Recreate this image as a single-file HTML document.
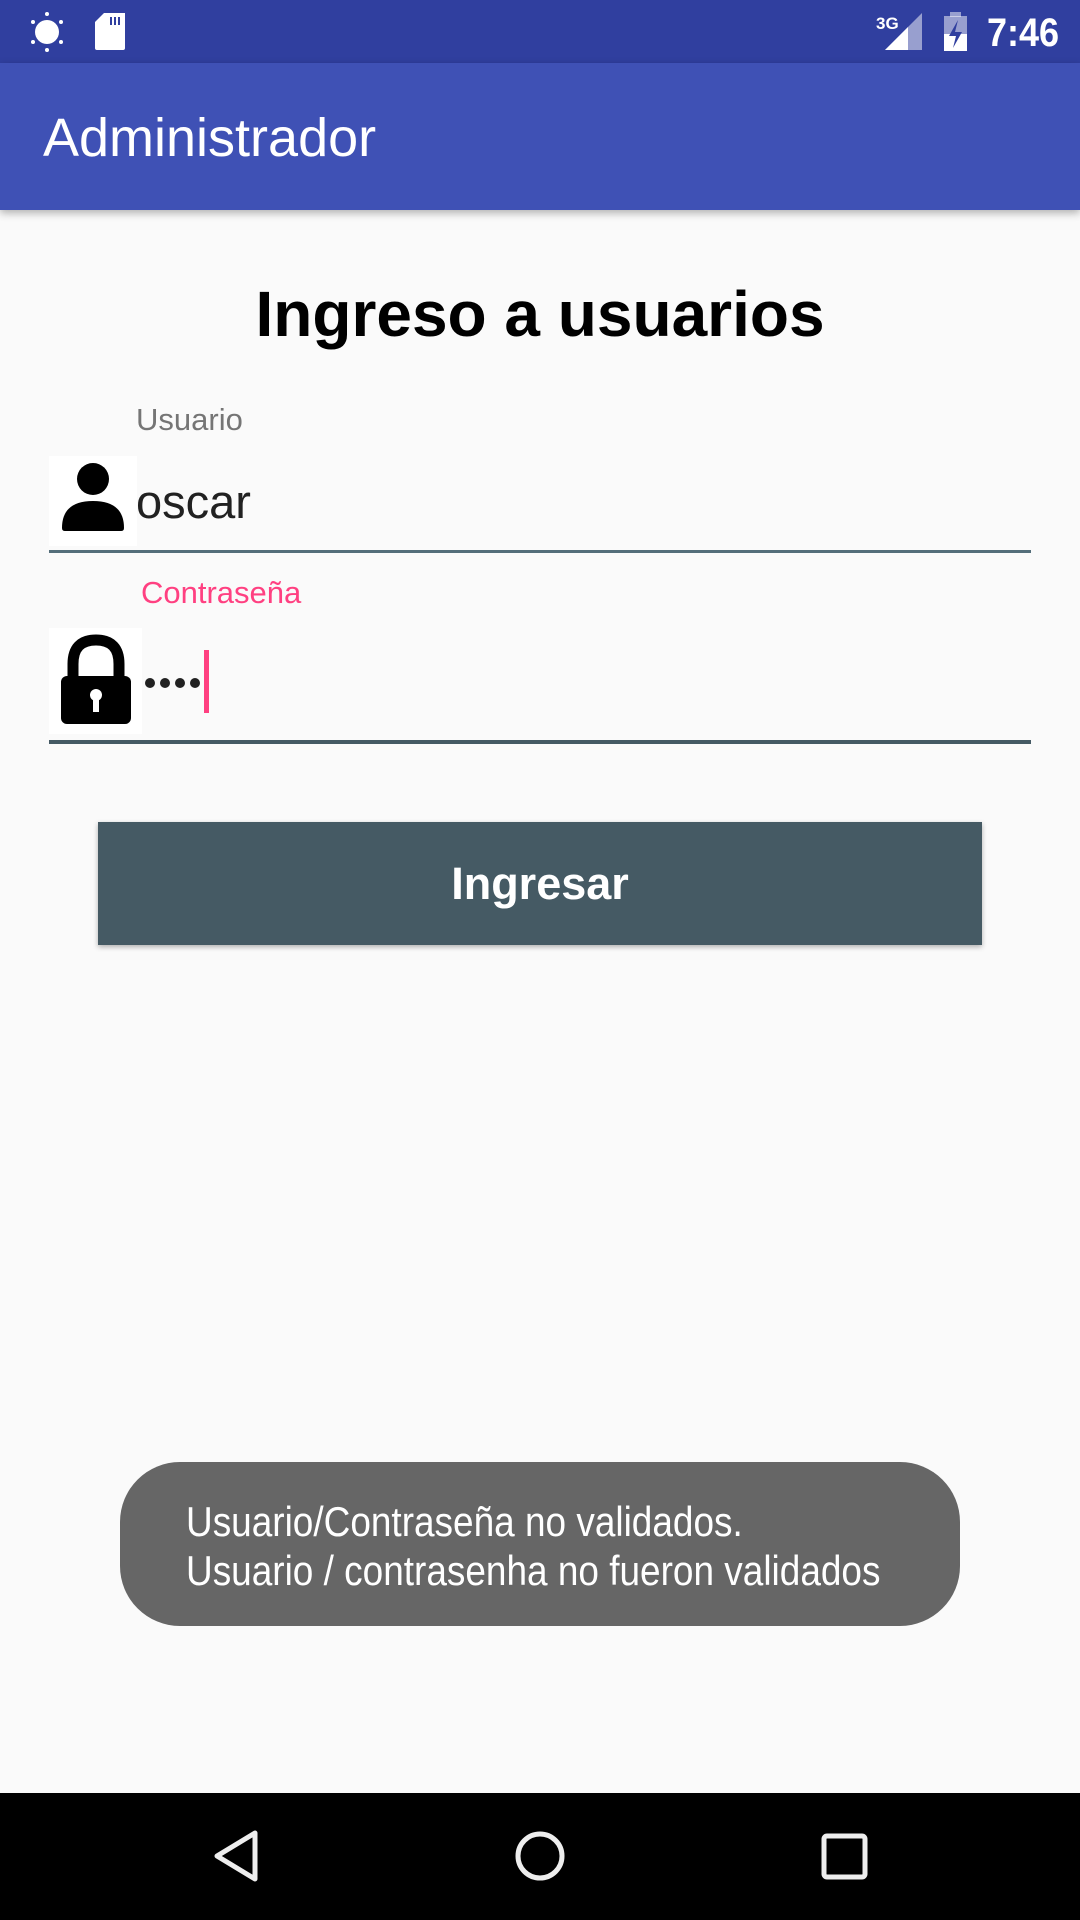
<!DOCTYPE html>
<html><head><meta charset="utf-8"><style>
*{margin:0;padding:0;box-sizing:border-box}
body{width:1080px;height:1920px;position:relative;background:#FAFAFA;font-family:"Liberation Sans",sans-serif;overflow:hidden}
.abs{position:absolute}
</style></head><body>
<div class="abs" style="left:0;top:0;width:1080px;height:63px;background:#303F9F"></div>
<svg class="abs" style="left:0;top:0" width="1080" height="63">
 <circle cx="47" cy="32" r="12" fill="#fff"/>
 <g fill="#fff"><circle cx="47" cy="14" r="2"/><circle cx="47" cy="50" r="2"/><circle cx="33" cy="22" r="2"/><circle cx="61" cy="22" r="2"/><circle cx="33" cy="42" r="2"/><circle cx="61" cy="42" r="2"/></g>
 <path d="M104 13 H125 V48 Q125 50 123 50 H97 Q95 50 95 48 V22 Z" fill="#fff"/>
 <rect x="110" y="17" width="2" height="8" fill="#303F9F"/><rect x="114" y="17" width="2" height="8" fill="#303F9F"/><rect x="118" y="17" width="2" height="8" fill="#303F9F"/>
 <text x="876" y="29" font-size="17" font-weight="bold" fill="#fff" font-family="Liberation Sans">3G</text>
 <path d="M885 50 L922 13 V50 Z" fill="#fff" opacity="0.5"/>
 <path d="M885 50 L908 27 V50 Z" fill="#fff"/>
 <rect x="944" y="16" width="23" height="35" fill="#fff" opacity="0.5"/><rect x="950" y="12" width="11" height="5" fill="#fff" opacity="0.5"/>
 <path d="M944 34 H967 V51 H944 Z" fill="#fff"/>
 <path d="M958 20 L949 36 H956 L953 48 L962 32 H955 Z" fill="#303F9F"/>
 <text x="987" y="46" font-size="40" fill="#fff" font-family="Liberation Sans" font-weight="bold" transform="translate(987 0) scale(0.9 1) translate(-987 0)">7:46</text>
</svg>
<div class="abs" style="left:0;top:63px;width:1080px;height:147px;background:#3F51B5;box-shadow:0 3px 8px rgba(0,0,0,.3)"></div>
<div class="abs" style="left:43px;top:106px;font-size:54px;color:#fff;line-height:64px">Administrador</div>

<div class="abs" style="left:0;top:274px;width:1080px;text-align:center;font-size:64px;font-weight:bold;color:#000;line-height:80px">Ingreso a usuarios</div>

<div class="abs" style="left:136px;top:400px;font-size:31px;color:#757575;line-height:40px">Usuario</div>
<svg class="abs" style="left:49px;top:456px" width="88" height="90">
 <rect width="88" height="90" fill="#fff"/>
 <circle cx="44" cy="23" r="16" fill="#000"/>
 <path d="M13 72 Q13 45 44 45 Q75 45 75 72 Q75 75 72 75 H16 Q13 75 13 72 Z" fill="#000"/>
</svg>
<div class="abs" style="left:136px;top:474px;font-size:47px;color:#212121;line-height:56px">oscar</div>
<div class="abs" style="left:49px;top:550px;width:982px;height:3px;background:#546E7A"></div>

<div class="abs" style="left:141px;top:573px;font-size:31px;color:#FF4081;line-height:40px">Contraseña</div>
<svg class="abs" style="left:49px;top:628px" width="93" height="106">
 <rect width="93" height="106" fill="#fff"/>
 <path d="M24 50 V36 Q24 12 47 12 Q70 12 70 36 V50" stroke="#000" stroke-width="11" fill="none"/>
 <rect x="12" y="48" width="70" height="48" rx="6" fill="#000"/>
 <circle cx="47" cy="67" r="6" fill="#fff"/><rect x="44" y="67" width="6" height="17" fill="#fff"/>
</svg>
<svg class="abs" style="left:140px;top:670px" width="70" height="30">
 <g fill="#212121"><circle cx="10" cy="13" r="5"/><circle cx="25" cy="13" r="5"/><circle cx="40" cy="13" r="5"/><circle cx="55" cy="13" r="5"/></g>
</svg>
<div class="abs" style="left:204px;top:650px;width:5px;height:63px;background:#FF4081"></div>
<div class="abs" style="left:49px;top:740px;width:982px;height:4px;background:#455A64"></div>

<div class="abs" style="left:98px;top:822px;width:884px;height:123px;background:#455A64;box-shadow:0 2px 5px rgba(0,0,0,.3);color:#fff;font-size:45px;font-weight:bold;text-align:center;line-height:123px">Ingresar</div>

<div class="abs" style="left:120px;top:1462px;width:840px;height:164px;background:#666;border-radius:60px"></div>
<div class="abs" style="left:186px;top:1497px;font-size:42px;color:#fff;line-height:49px;transform:scaleX(0.88);transform-origin:left top;white-space:nowrap">Usuario/Contraseña no validados.<br>Usuario / contrasenha no fueron validados</div>

<div class="abs" style="left:0;top:1793px;width:1080px;height:127px;background:#000"></div>
<svg class="abs" style="left:0;top:1793px" width="1080" height="127">
 <path d="M255 40 L217 63 L255 86 Z" stroke="#eee" stroke-width="5" fill="none" stroke-linejoin="round"/>
 <circle cx="540" cy="63" r="22" stroke="#eee" stroke-width="5" fill="none"/>
 <rect x="824" y="43" width="41" height="41" rx="3" stroke="#eee" stroke-width="5" fill="none"/>
</svg>
</body></html>
